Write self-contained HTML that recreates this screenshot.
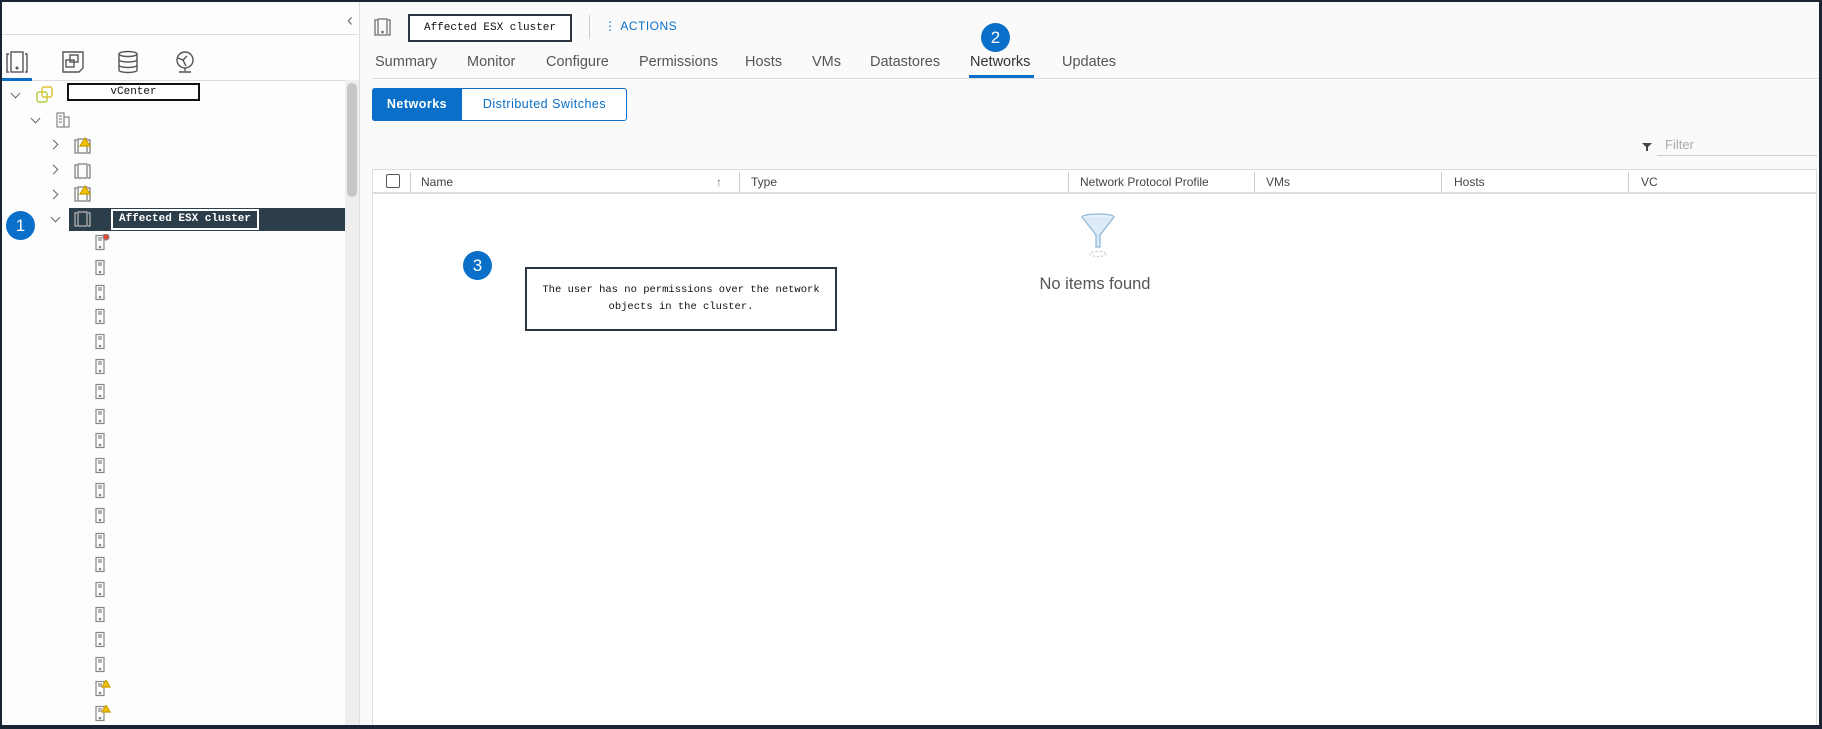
<!DOCTYPE html>
<html><head><meta charset="utf-8"><style>
*{margin:0;padding:0;box-sizing:border-box}
body{width:1822px;height:729px;overflow:hidden;background:#1b2433;font-family:"Liberation Sans",sans-serif;position:relative}
.a{position:absolute}
.mono{font-family:"Liberation Mono",monospace}
.tab{position:absolute;top:54px;font-size:14.5px;color:#565656}
.th{position:absolute;top:175px;font-size:12px;color:#444}
.sep{position:absolute;top:172px;width:1px;height:20px;background:#ccc}
.chev{position:absolute;width:7px;height:7px;border-right:1.3px solid #666;border-bottom:1.3px solid #666}
.circ{position:absolute;border-radius:50%;background:#0a6fc8;color:#fff;font-size:17px;text-align:center}
</style></head><body>
<div class="a" style="left:2px;top:2px;width:358px;height:723px;background:#fdfdfd"></div>
<div class="a" style="left:2px;top:34px;width:356px;height:1px;background:#ddd"></div>
<div class="a" style="left:347px;top:10px;font-size:18px;color:#777">&#8249;</div>
<div class="a" style="left:2px;top:80px;width:356px;height:1px;background:#ddd"></div>
<div class="a" style="left:2px;top:78px;width:30px;height:3px;background:#0a6fc8"></div>
<svg class="a" style="left:5px;top:50px" width="24" height="24" viewBox="0 0 24 24" fill="none" stroke="#555" stroke-width="1.4"><rect x="6" y="2" width="12" height="20"/><path d="M4 4H2v18h2M20 4h2v18h-2"/><circle cx="12" cy="18" r=".8" fill="#555"/></svg>
<svg class="a" style="left:61px;top:50px" width="24" height="24" viewBox="0 0 24 24" fill="none" stroke="#555" stroke-width="1.4"><path d="M2 2h20v16l-4 4H2z"/><rect x="9" y="5" width="8" height="7"/><rect x="5" y="10" width="8" height="7"/></svg>
<svg class="a" style="left:117px;top:50px" width="22" height="24" viewBox="0 0 22 24" fill="none" stroke="#555" stroke-width="1.4"><ellipse cx="11" cy="4" rx="9" ry="2.5"/><path d="M2 4v16c0 1.5 4 2.5 9 2.5s9-1 9-2.5V4M2 9.5c0 1.5 4 2.5 9 2.5s9-1 9-2.5M2 15c0 1.5 4 2.5 9 2.5s9-1 9-2.5"/></svg>
<svg class="a" style="left:173px;top:50px" width="24" height="24" viewBox="0 0 24 24" fill="none" stroke="#555" stroke-width="1.4"><circle cx="12" cy="10" r="8"/><path d="M5 8l5 2 4-4M10 10l3 6M12 18v3M6 22h12"/></svg>
<div class="chev" style="left:12px;top:90px;transform:rotate(45deg)"></div>
<svg class="a" style="left:36px;top:86px" width="18" height="18" viewBox="0 0 18 18" fill="none" stroke="#b5cf4a" stroke-width="1.5"><rect x="1" y="6" width="10" height="10" rx="2"/><rect x="6" y="1" width="10" height="10" rx="2" stroke="#e2c43a"/></svg>
<div class="a mono" style="left:67px;top:83px;width:133px;height:18px;border:2px solid #111;background:#fff;font-size:11px;text-align:center;line-height:14px;color:#111">vCenter</div>
<div class="chev" style="left:32px;top:115px;transform:rotate(45deg)"></div>
<svg class="a" style="left:56px;top:112px" width="14" height="16" viewBox="0 0 14 16" fill="none" stroke="#888" stroke-width="1.2"><rect x="1" y="1" width="7" height="14"/><rect x="8" y="5" width="5" height="10"/><path d="M3 4h3M3 7h3M3 10h3"/></svg>
<div class="chev" style="left:50px;top:141px;transform:rotate(-45deg)"></div>
<div class="chev" style="left:50px;top:166px;transform:rotate(-45deg)"></div>
<div class="chev" style="left:50px;top:191px;transform:rotate(-45deg)"></div>
<svg class="a" style="left:74px;top:137px" width="18" height="18" viewBox="0 0 18 18" fill="none" stroke="#777" stroke-width="1.2"><rect x="4" y="2" width="9" height="14"/><path d="M3 3H1v13h2M14 3h2v13h-2"/><path d="M11 1l5 8h-10z" fill="#f2c300" stroke="#c9a000"/></svg>
<svg class="a" style="left:74px;top:162px" width="18" height="18" viewBox="0 0 18 18" fill="none" stroke="#777" stroke-width="1.2"><rect x="4" y="2" width="9" height="14"/><path d="M3 3H1v13h2M14 3h2v13h-2"/></svg>
<svg class="a" style="left:74px;top:185px" width="18" height="18" viewBox="0 0 18 18" fill="none" stroke="#777" stroke-width="1.2"><rect x="4" y="2" width="9" height="14"/><path d="M3 3H1v13h2M14 3h2v13h-2"/><path d="M11 1l5 8h-10z" fill="#f2c300" stroke="#c9a000"/></svg>
<div class="a" style="left:69px;top:208px;width:276px;height:23px;background:#2d3e4b"></div>
<div class="chev" style="left:52px;top:214px;transform:rotate(45deg)"></div>
<svg class="a" style="left:74px;top:210px" width="18" height="18" viewBox="0 0 18 18" fill="none" stroke="#bbb" stroke-width="1.2"><rect x="4" y="2" width="9" height="14"/><path d="M3 3H1v13h2M14 3h2v13h-2"/></svg>
<div class="a mono" style="left:111px;top:209px;width:148px;height:21px;border:2px solid #fff;color:#fff;font-size:11px;font-weight:bold;text-align:center;line-height:17px">Affected ESX cluster</div>
<div class="circ" style="left:6px;top:211px;width:29px;height:29px;line-height:29px">1</div>
<div class="a" style="left:345px;top:80px;width:14px;height:645px;background:#eee"></div>
<div class="a" style="left:347px;top:83px;width:10px;height:114px;background:#c6c6c6;border-radius:5px"></div>
<div class="a" style="left:359px;top:2px;width:1px;height:723px;background:#ddd"></div>
<div id="hosts"></div>
<script>
var h='';for(var i=0;i<20;i++){var y=234+i*24.8;var b='';
if(i==0)b='<circle cx="13" cy="3" r="3" fill="#e43"/>';
if(i>=18)b='<path d="M13 0l4 7h-8z" fill="#f2c300" stroke="#c9a000"/>';
h+='<svg class="a" style="left:93px;top:'+y+'px" width="18" height="17" viewBox="0 0 18 17" fill="none" stroke="#888" stroke-width="1.2"><rect x="3" y="1.5" width="8" height="14"/><path d="M5 4h4M5 6h4"/><circle cx="7" cy="13" r=".7" fill="#666"/>'+b+'</svg>';}
document.getElementById('hosts').outerHTML=h;
</script>
<div class="a" style="left:360px;top:2px;width:1459px;height:723px;background:#fafafa"></div>
<svg class="a" style="left:374px;top:17px" width="18" height="20" viewBox="0 0 18 20" fill="none" stroke="#666" stroke-width="1.2"><rect x="4" y="2" width="9" height="16"/><path d="M3 3H1v15h2M14 3h2v15h-2"/><circle cx="8.5" cy="15" r=".7" fill="#666"/></svg>
<div class="a mono" style="left:408px;top:14px;width:164px;height:28px;border:2px solid #2a3540;background:#fff;font-size:11px;text-align:center;line-height:24px;color:#111">Affected ESX cluster</div>
<div class="a" style="left:589px;top:15px;width:1px;height:24px;background:#ccc"></div>
<div class="a" style="left:604px;top:19px;font-size:12px;color:#0a6fc8;letter-spacing:.5px">&#8942;&nbsp;ACTIONS</div>
<div class="circ" style="left:981px;top:23px;width:29px;height:29px;line-height:29px">2</div>
<div class="tab" style="left:375px">Summary</div><div class="tab" style="left:467px">Monitor</div><div class="tab" style="left:546px">Configure</div><div class="tab" style="left:639px">Permissions</div><div class="tab" style="left:745px">Hosts</div><div class="tab" style="left:812px">VMs</div><div class="tab" style="left:870px">Datastores</div><div class="tab" style="left:970px;color:#333">Networks</div><div class="tab" style="left:1062px">Updates</div>
<div class="a" style="left:372px;top:78px;width:1447px;height:1px;background:#ddd"></div>
<div class="a" style="left:969px;top:75px;width:65px;height:3px;background:#0a6fc8"></div>
<div class="a" style="left:372px;top:88px;width:255px;height:33px;border:1px solid #0a6fc8;border-radius:3px;background:#fff"></div>
<div class="a" style="left:372px;top:88px;width:90px;height:33px;background:#0a6fc8;border-radius:3px 0 0 3px;color:#fff;font-size:12.5px;font-weight:bold;line-height:33px;text-align:center;letter-spacing:.5px">Networks</div>
<div class="a" style="left:462px;top:88px;width:165px;height:33px;color:#0a6fc8;font-size:12.5px;line-height:33px;text-align:center;letter-spacing:.5px">Distributed Switches</div>
<svg class="a" style="left:1642px;top:142px" width="10" height="10" viewBox="0 0 10 10"><path d="M0 1h10L6 5v4H4V5z" fill="#444"/></svg>
<div class="a" style="left:1665px;top:137px;font-size:13px;color:#aaa">Filter</div>
<div class="a" style="left:1657px;top:155px;width:160px;height:1px;background:#ccc"></div>
<div class="a" style="left:372px;top:169px;width:1445px;height:556px;background:#fff;border:1px solid #ddd;border-bottom:none"></div>
<div class="a" style="left:373px;top:192px;width:1443px;height:2px;background:#ddd"></div>
<div class="a" style="left:386px;top:174px;width:14px;height:14px;border:1.2px solid #555;border-radius:2px"></div>
<div class="sep" style="left:410px"></div><div class="sep" style="left:739px"></div><div class="sep" style="left:1068px"></div><div class="sep" style="left:1254px"></div><div class="sep" style="left:1441px"></div><div class="sep" style="left:1628px"></div>
<div class="th" style="left:421px">Name</div><div class="th" style="left:716px;color:#777">&#8593;</div><div class="th" style="left:751px">Type</div><div class="th" style="left:1080px">Network Protocol Profile</div><div class="th" style="left:1266px">VMs</div><div class="th" style="left:1454px">Hosts</div><div class="th" style="left:1641px">VC</div>
<svg class="a" style="left:1080px;top:212px" width="36" height="48" viewBox="0 0 36 48" fill="none" stroke="#8fb8d8" stroke-width="1.3"><ellipse cx="18" cy="5" rx="16" ry="3" fill="#e8f2fa"/><path d="M2 5l14 18v12h4V23L34 5" fill="#dcebf7"/><ellipse cx="18" cy="42" rx="8" ry="2.5" stroke="#ccc" stroke-dasharray="2 2"/></svg>
<div class="a" style="left:1000px;top:275px;width:190px;text-align:center;font-size:16.5px;color:#555;white-space:nowrap">No items found</div>
<div class="circ" style="left:463px;top:251px;width:29px;height:29px;line-height:29px">3</div>
<div class="a mono" style="left:525px;top:267px;width:312px;height:64px;border:2px solid #2a3540;background:#fff;font-size:10.5px;text-align:center;color:#111;line-height:17px;padding-top:13px">The user has no permissions over the network<br>objects in the cluster.</div>
</body></html>
